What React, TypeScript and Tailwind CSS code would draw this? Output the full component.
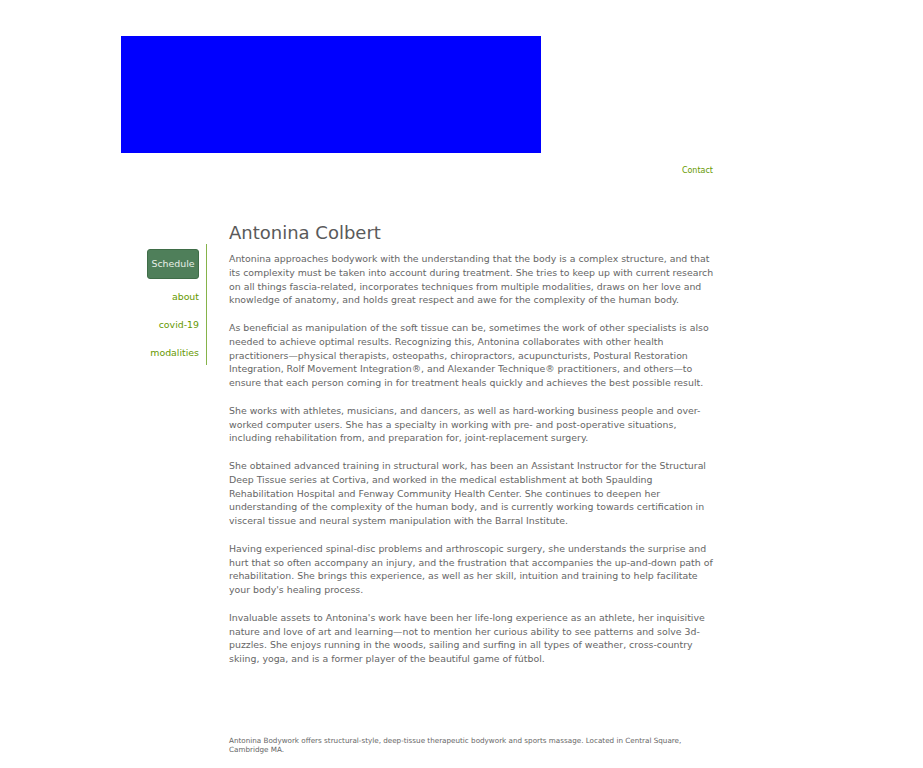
import React from "react";

const paras = [
  "Antonina approaches bodywork with the understanding that the body is a complex structure, and that its complexity must be taken into account during treatment. She tries to keep up with current research on all things fascia-related, incorporates techniques from multiple modalities, draws on her love and knowledge of anatomy, and holds great respect and awe for the complexity of the human body.",
  "As beneficial as manipulation of the soft tissue can be, sometimes the work of other specialists is also needed to achieve optimal results. Recognizing this, Antonina collaborates with other health practitioners\u2014physical therapists, osteopaths, chiropractors, acupuncturists, Postural Restoration Integration, Rolf Movement Integration\u00ae, and Alexander Technique\u00ae practitioners, and others\u2014to ensure that each person coming in for treatment heals quickly and achieves the best possible result.",
  "She works with athletes, musicians, and dancers, as well as hard-working business people and over-worked computer users. She has a specialty in working with pre- and post-operative situations, including rehabilitation from, and preparation for, joint-replacement surgery.",
  "She obtained advanced training in structural work, has been an Assistant Instructor for the Structural Deep Tissue series at Cortiva, and worked in the medical establishment at both Spaulding Rehabilitation Hospital and Fenway Community Health Center. She continues to deepen her understanding of the complexity of the human body, and is currently working towards certification in visceral tissue and neural system manipulation with the Barral Institute.",
  "Having experienced spinal-disc problems and arthroscopic surgery, she understands the surprise and hurt that so often accompany an injury, and the frustration that accompanies the up-and-down path of rehabilitation. She brings this experience, as well as her skill, intuition and training to help facilitate your body's healing process.",
  "Invaluable assets to Antonina's work have been her life-long experience as an athlete, her inquisitive nature and love of art and learning\u2014not to mention her curious ability to see patterns and solve 3d-puzzles. She enjoys running in the woods, sailing and surfing in all types of weather, cross-country skiing, yoga, and is a former player of the beautiful game of f\u00fatbol.",
];

export default function App() {
  return (
    <div
      className="min-h-[768px] bg-white text-[#666]"
      style={{ fontFamily: '"DejaVu Sans", sans-serif' }}
    >
      <div className="ml-[121px] w-[592px] pt-[36px]">
        <div className="h-[117px] w-[420px] bg-[#0000ff]" />
        <div className="mt-[13px] text-right text-[8px] leading-[10px] text-[#669900]">
          Contact
        </div>
      </div>
      <div className="mt-[46px] flex">
        <div className="w-[208px] shrink-0 pt-[22px]">
          <div className="ml-[148px] flex w-[59px] flex-col items-end border-r border-[#86b34a] pr-[7px] pt-[5px] pb-[5px] text-[9.4px]">
            <div className="flex h-[30px] w-[52px] items-center justify-center rounded-[3px] border border-[#3f6d48] bg-[#4f7f5a] text-[#e8efe8]">
              Schedule
            </div>
            <div className="mt-[11px] h-[14px] leading-[14px] text-[#669900]">about</div>
            <div className="mt-[14px] h-[14px] leading-[14px] text-[#669900]">covid-19</div>
            <div className="mt-[14px] h-[14px] leading-[14px] text-[#669900]">modalities</div>
          </div>
        </div>
        <div className="ml-[21px] w-[487px]">
          <h1 className="text-[18px] leading-[22px] text-[#5a5a5a]">Antonina Colbert</h1>
          <div className="mt-[8px] flex flex-col gap-[14px] text-[9.4px] leading-[13.75px]">
            {paras.map((p, i) => (
              <p key={i}>{p}</p>
            ))}
          </div>
          <div className="mt-[70px] pb-[14px] text-[7.2px] leading-[9px] text-[#666]">
            Antonina Bodywork offers structural-style, deep-tissue therapeutic bodywork and sports massage. Located in Central Square, Cambridge MA.
          </div>
        </div>
      </div>
    </div>
  );
}
